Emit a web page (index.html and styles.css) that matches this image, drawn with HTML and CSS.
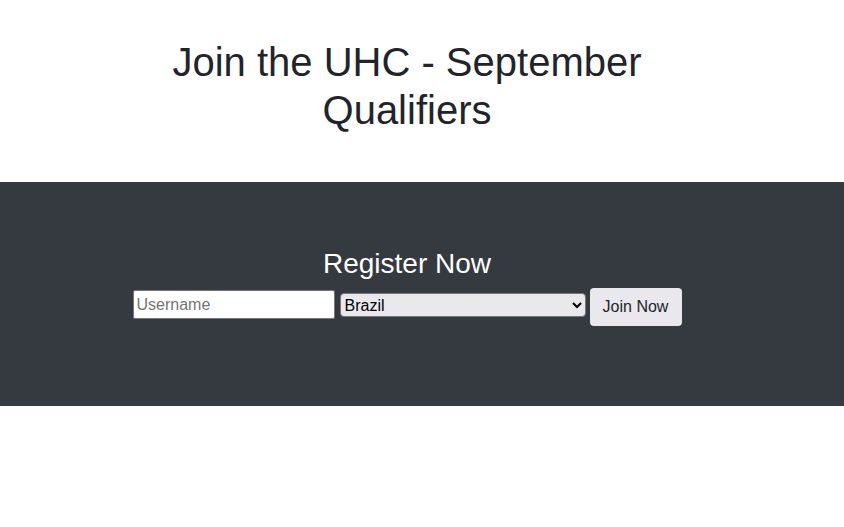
FILE: index.html
```html
<!DOCTYPE html>
<html lang="en">
<head>
<meta charset="utf-8">
<title>Join the UHC</title>
<link rel="stylesheet" href="styles.css">
</head>
<body>
<header class="hero">
  <div class="wrap">
    <h1 class="title">Join the UHC - September Qualifiers</h1>
  </div>
</header>
<section class="register">
  <div class="wrap">
    <h3 class="reg-title">Register Now</h3>
    <form class="reg-form">
      <input class="field-user" type="text" placeholder="Username">
      <select class="field-country">
        <option>Brazil</option>
        <option>Argentina</option>
        <option>United States</option>
      </select>
      <button class="btn-join" type="button">Join Now</button>
    </form>
  </div>
</section>
</body>
</html>
```
FILE: styles.css
```css
* { box-sizing: border-box; }
html, body {
  margin: 0;
  padding: 0;
  background: #fff;
  font-family: "Liberation Sans", Arial, sans-serif;
  color: #212529;
}
.wrap {
  margin-left: 62px;
  width: 690px;
}
.hero {
  padding-top: 38px;
  height: 182px;
}
.title {
  margin: 0 auto;
  width: 560px;
  font-size: 40px;
  font-weight: 400;
  line-height: 48px;
  text-align: center;
  color: #212529;
}
.register {
  background: #343a40;
  height: 224px;
  padding-top: 65px;
}
.reg-title {
  margin: 0 0 7px;
  font-size: 28px;
  font-weight: 400;
  line-height: 34px;
  text-align: center;
  color: #fff;
}
.reg-form {
  display: flex;
  justify-content: center;
  align-items: flex-start;
  margin: 0;
}
.field-user {
  width: 202px;
  height: 29px;
  margin-top: 2px;
  padding: 0 3px;
  border: 1px solid #767676;
  border-radius: 2px;
  background: #fff;
  font-family: "Liberation Sans", Arial, sans-serif;
  font-size: 16px;
  color: #212529;
}
.field-user::placeholder { color: #757575; }
.field-country {
  width: 246px;
  height: 24px;
  margin: 5px 0 0 5px;
  border: 1px solid #767676;
  border-radius: 4px;
  background-color: #e9e9ed;
  font-family: "Liberation Sans", Arial, sans-serif;
  font-size: 16px;
  color: #000;
}
.btn-join {
  width: 92px;
  height: 38px;
  margin-left: 4px;
  border: none;
  border-radius: 4px;
  background: #e9e9ed;
  font-family: "Liberation Sans", Arial, sans-serif;
  font-size: 16px;
  color: #212529;
  padding: 0;
}
```
